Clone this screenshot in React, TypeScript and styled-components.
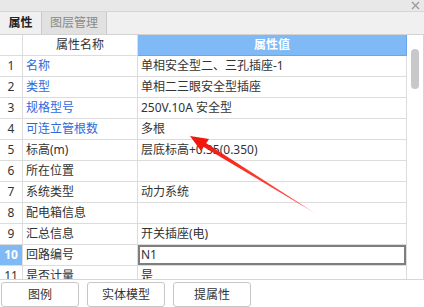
import React from 'react';
import styled, { createGlobalStyle } from 'styled-components';

const Global = createGlobalStyle`
  html, body { margin: 0; padding: 0; background: #fff; overflow: hidden; }
  body { font-family: "Noto Sans", "Noto Sans CJK SC", sans-serif; font-size: 12px; color: #333; }
  * { box-sizing: border-box; }
`;

const Panel = styled.div`
  position: relative;
  width: 424px;
  height: 307px;
  display: flex;
  flex-direction: column;
  background: #fff;
  overflow: hidden;
`;

const TitleBar = styled.div`
  height: 12px;
  flex: none;
  background: #e8e8e8;
  border-bottom: 1px solid #d6d6d6;
  display: flex;
  justify-content: flex-end;
  align-items: center;
  padding-right: 4px;
`;

const TabBar = styled.div`
  height: 23px;
  flex: none;
  background: #f0f0f0;
  border-bottom: 1px solid #d2d2d2;
  display: flex;
`;

const Tab = styled.div<{ $active?: boolean; $w: number }>`
  width: ${p => p.$w}px;
  height: 100%;
  display: flex;
  align-items: center;
  justify-content: center;
  border-right: 1px solid #c9c9c9;
  background: ${p => (p.$active ? '#f0f0f0' : '#e1e1e1')};
  color: ${p => (p.$active ? '#222' : '#8a8a8a')};
  font-weight: ${p => (p.$active ? 600 : 400)};
  font-size: 12px;
  line-height: 1;
`;

const TableArea = styled.div`
  height: 245px;
  flex: none;
  display: flex;
  border-bottom: 1px solid #d6d6d6;
`;

const Grid = styled.div`
  width: 407px;
  height: 244px;
  display: grid;
  grid-template-columns: 23px 115px 269px;
  grid-auto-rows: 21px;
  align-content: start;
  overflow: hidden;
`;

type CellKind = 'index' | 'name' | 'value' | 'headName' | 'headValue' | 'indexSel' | 'valueSel';

const Cell = styled.div<{ $kind: CellKind; $link?: boolean }>`
  display: flex;
  align-items: center;
  white-space: nowrap;
  overflow: hidden;
  border-right: 1px solid #dcdcdc;
  border-bottom: 1px solid #dcdcdc;
  line-height: 1;
  font-size: 12px;
  padding: ${p => (p.$kind === 'name' || p.$kind === 'value' || p.$kind === 'valueSel' ? '0 0 0 3px' : '0')};
  justify-content: ${p =>
    p.$kind === 'index' || p.$kind === 'indexSel' || p.$kind === 'headName' || p.$kind === 'headValue'
      ? 'center'
      : 'flex-start'};
  color: ${p =>
    p.$kind === 'headValue' || p.$kind === 'indexSel' ? '#fff' : p.$link ? '#2f68dc' : '#333'};
  background: ${p => (p.$kind === 'headValue' || p.$kind === 'indexSel' ? '#7fbaf6' : '#fff')};
  font-weight: ${p => (p.$kind === 'headValue' || p.$kind === 'indexSel' ? 700 : 400)};
  ${p => (p.$kind === 'headValue' ? 'border-right-color: #6aa6ec; border-bottom-color: #6aa6ec;' : '')}
  ${p => (p.$kind === 'valueSel' ? 'box-shadow: inset 0 0 0 2px #7e7e7e;' : '')}
`;

const ScrollTrack = styled.div`
  width: 17px;
  height: 244px;
  border-right: 1px solid #d6d6d6;
  background: #fff;
  padding: 14px 0 0 4px;
`;

const Thumb = styled.div`
  width: 8px;
  height: 40px;
  border-radius: 4px;
  background: #c8c8c8;
`;

const ButtonBar = styled.div`
  flex: 1;
  display: flex;
  gap: 8px;
  padding: 2px 0 0 1px;
`;

const Button = styled.button`
  width: 78px;
  height: 25px;
  border: 1px solid #c6c6c6;
  border-radius: 3px;
  background: #fff;
  color: #333;
  font-family: "Noto Sans", "Noto Sans CJK SC", sans-serif;
  font-size: 12px;
  line-height: 1;
  padding: 0;
`;

const Overlay = styled.svg`
  position: absolute;
  left: 0;
  top: 0;
  pointer-events: none;
`;

const rows: { name: string; value: string; link?: boolean }[] = [
  { name: '名称', value: '单相安全型二、三孔插座-1', link: true },
  { name: '类型', value: '单相二三眼安全型插座', link: true },
  { name: '规格型号', value: '250V.10A 安全型', link: true },
  { name: '可连立管根数', value: '多根', link: true },
  { name: '标高(m)', value: '层底标高+0.35(0.350)' },
  { name: '所在位置', value: '' },
  { name: '系统类型', value: '动力系统' },
  { name: '配电箱信息', value: '' },
  { name: '汇总信息', value: '开关插座(电)' },
  { name: '回路编号', value: 'N1' },
  { name: '是否计量', value: '是' },
];

export default function App() {
  return (
    <>
      <Global />
      <Panel>
        <TitleBar>
          <svg width="9" height="9" viewBox="0 0 9 9">
            <path d="M1 1 L8 8 M8 1 L1 8" stroke="#9a9a9a" strokeWidth="1.3" />
          </svg>
        </TitleBar>
        <TabBar>
          <Tab $active $w={42}>属性</Tab>
          <Tab $w={65}>图层管理</Tab>
        </TabBar>
        <TableArea>
          <Grid>
            <Cell $kind="index" />
            <Cell $kind="headName">属性名称</Cell>
            <Cell $kind="headValue">属性值</Cell>
            {rows.map((r, i) => {
              const sel = i === 9;
              return (
                <React.Fragment key={i}>
                  <Cell $kind={sel ? 'indexSel' : 'index'}>{i + 1}</Cell>
                  <Cell $kind="name" $link={r.link}>{r.name}</Cell>
                  <Cell $kind={sel ? 'valueSel' : 'value'}>{r.value}</Cell>
                </React.Fragment>
              );
            })}
          </Grid>
          <ScrollTrack>
            <Thumb />
          </ScrollTrack>
        </TableArea>
        <ButtonBar>
          <Button>图例</Button>
          <Button>实体模型</Button>
          <Button>提属性</Button>
        </ButtonBar>
        <Overlay width="424" height="307" viewBox="0 0 424 307">
          <defs>
            <linearGradient id="shaft" x1="318" y1="215" x2="200" y2="142" gradientUnits="userSpaceOnUse">
              <stop offset="0" stopColor="#ff2a1a" stopOpacity="0" />
              <stop offset="0.15" stopColor="#ff2a1a" stopOpacity="0.8" />
              <stop offset="1" stopColor="#f0170f" />
            </linearGradient>
          </defs>
          <polygon points="318,215 202,140.6 199.6,144.4" fill="url(#shaft)" />
          <polygon points="190,136 209,139 201,151" fill="#f0170f" />
        </Overlay>
      </Panel>
    </>
  );
}
